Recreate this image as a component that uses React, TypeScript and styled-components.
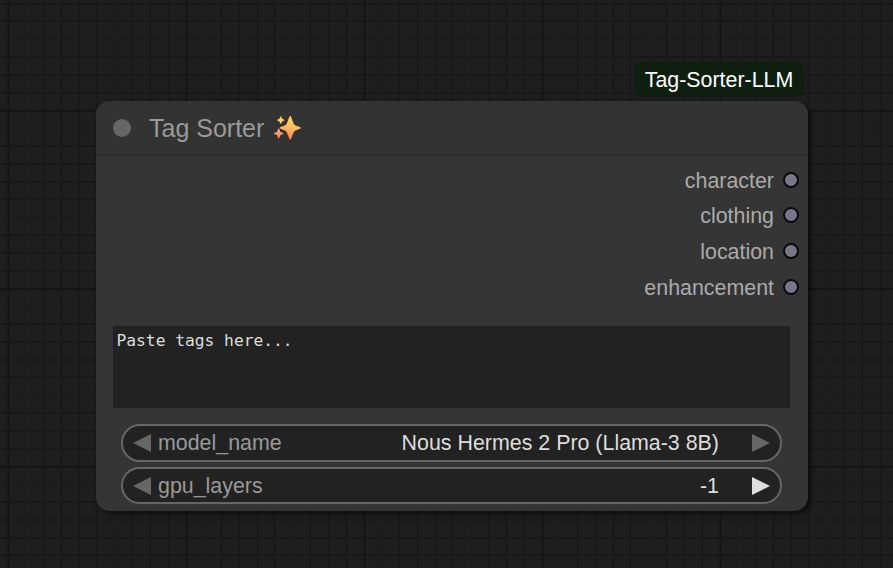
import React from "react";
import styled, { createGlobalStyle } from "styled-components";

const GlobalStyle = createGlobalStyle`
  * { box-sizing: border-box; }
  html, body { margin: 0; padding: 0; background: #1e1e1e; }
  body { font-family: "Liberation Sans", Arial, sans-serif; overflow: hidden; }
`;

const TILE = 178;

/* Stops for one tile of the canvas grid: a major line, then nine minor ones. */
const gridLines = (direction: string) => {
  const stops = ["#141414 0 2px"];
  let last = 2;
  [17, 35, 53, 71, 88, 106, 124, 142, 160].forEach((at) => {
    const faint = at === 17 || at === 106;
    stops.push(`transparent ${last}px ${at}px`);
    stops.push(`${faint ? "#1b1b1b" : "#181818"} ${at}px ${at + 2}px`);
    last = at + 2;
  });
  stops.push(`transparent ${last}px ${TILE}px`);
  return `linear-gradient(${direction}, ${stops.join(", ")})`;
};

const Canvas = styled.main`
  width: 893px;
  height: 568px;
  padding: 62px 85px 0 95.5px;
  background-color: #1e1e1e;
  background-image: ${gridLines("to right")}, ${gridLines("to bottom")};
  background-size: ${TILE}px ${TILE}px;
  background-position: 7.5px 0, 0 110px;
  display: flex;
  flex-direction: column;
  overflow: hidden;
`;

const Badge = styled.div`
  align-self: flex-end;
  margin-right: 4px;
  width: 170px;
  height: 35px;
  margin-bottom: 3.5px;
  padding-top: 1px;
  border-radius: 8px;
  background: #0f1f0f;
  color: #fff;
  font-size: 21.4px;
  line-height: 35px;
  text-align: center;
  white-space: nowrap;
`;

const Node = styled.section`
  width: 712px;
  height: 410px;
  border-radius: 14px;
  background: #353535;
  box-shadow: 3px 3px 5px rgba(0, 0, 0, 0.55);
  display: flex;
  flex-direction: column;
`;

const Header = styled.header`
  height: 55px;
  border-radius: 14px 14px 0 0;
  background: #333;
  border-bottom: 2px solid #2c2c2c;
  padding: 1px 0 0 17.5px;
  display: flex;
  align-items: center;
`;

const CollapseDot = styled.span`
  width: 18px;
  height: 18px;
  border-radius: 50%;
  background: #666;
`;

const Title = styled.h1`
  margin: 0 0 0 18px;
  color: #999;
  font-size: 25px;
  font-weight: 400;
  line-height: 30px;
  white-space: nowrap;
`;

const SparkleIcon = styled.svg`
  width: 27px;
  height: 24px;
  margin-left: 9.5px;
`;

const Outputs = styled.ul`
  list-style: none;
  margin: 0;
  padding: 6.5px 8.5px 0 0;
  height: 170px;
`;

const Output = styled.li`
  height: 35.6px;
  display: flex;
  justify-content: flex-end;
  align-items: center;
  gap: 9px;
  color: #aaa;
  font-size: 21.4px;
  line-height: 26px;
`;

const OutputLabel = styled.span`
  padding-top: 2px;
`;

const Port = styled.span`
  width: 16px;
  height: 16px;
  border-radius: 50%;
  border: 2px solid #0a0a0a;
  background: #778;
`;

const TagInput = styled.textarea`
  display: block;
  width: 677px;
  height: 82px;
  margin: 0 0 16.5px 17.5px;
  padding: 5px 3.5px;
  border: 0;
  outline: 0;
  resize: none;
  background: #222;
  color: #ddd;
  font: 16.25px/20px "DejaVu Sans Mono", monospace;
  &::placeholder { color: #ddd; opacity: 1; }
`;

const Widget = styled.div`
  width: 661px;
  height: 37.5px;
  margin: 0 0 5.3px 25.5px;
  padding: 0 10px;
  border: 2px solid #666;
  border-radius: 19px;
  background: #222;
  display: flex;
  align-items: center;
  font-size: 21.4px;
  line-height: 24px;
  white-space: nowrap;
`;

const Arrow = styled.svg<{ $active?: boolean }>`
  width: 18px;
  height: 18px;
  flex: none;
  fill: ${(p) => (p.$active ? "#ddd" : "#666")};
`;

const Name = styled.span`
  margin-left: 7px;
  padding-top: 0.6px;
  color: #999;
`;

const Value = styled.span`
  margin: 0 33px 0 auto;
  padding-top: 0.6px;
  color: #ddd;
`;

const Sparkles = () => (
  <SparkleIcon viewBox="0 0 27 24" aria-hidden="true">
    <defs>
      <linearGradient id="spark" x1="0" y1="0" x2="0" y2="24" gradientUnits="userSpaceOnUse">
        <stop offset="0" stopColor="#ffd567" />
        <stop offset="0.5" stopColor="#ffb85e" />
        <stop offset="1" stopColor="#f87858" />
      </linearGradient>
    </defs>
    <g fill="url(#spark)">
      <path d="M15.2 1.3q1-2.4 2 0l2.4 6.2q.6 1.4 2 1.9l4.3 1.6q1.8.9 0 1.8l-4.4 1.6q-1.3.6-1.9 2l-2.4 6q-1 2.4-2 0l-2.4-6q-.6-1.4-1.9-2l-4.3-1.6q-1.8-.9 0-1.8l4.3-1.6q1.3-.5 1.9-1.9z" />
      <path d="M6.2.9q.6-1.4 1.2 0l.8 1.9 1.7.7q1.3.6 0 1.2l-1.7.7-.8 1.9q-.6 1.3-1.2 0l-.8-1.9-1.7-.7q-1.3-.6 0-1.2l1.7-.7z" />
      <path d="M4 13.3q.7-1.5 1.4 0l1 2.6 2.3.9q1.4.7 0 1.4l-2.3.9-1 2.6q-.7 1.5-1.4 0l-1-2.6-2.3-.9q-1.4-.7 0-1.4l2.3-.9z" />
    </g>
  </SparkleIcon>
);

const LeftArrow = () => (
  <Arrow viewBox="0 0 18 18">
    <path d="M18 0v18L0 9z" />
  </Arrow>
);

const RightArrow = ({ active }: { active?: boolean }) => (
  <Arrow viewBox="0 0 18 18" $active={active}>
    <path d="M0 0v18L18 9z" />
  </Arrow>
);

const outputs = ["character", "clothing", "location", "enhancement"];
const widgets = [
  { name: "model_name", value: "Nous Hermes 2 Pro (Llama-3 8B)", next: false },
  { name: "gpu_layers", value: "-1", next: true },
];

export default function App() {
  return (
    <>
      <GlobalStyle />
      <Canvas>
        <Badge>Tag-Sorter-LLM</Badge>
        <Node>
          <Header>
            <CollapseDot />
            <Title>Tag Sorter</Title>
            <Sparkles />
          </Header>
          <Outputs>
            {outputs.map((name) => (
              <Output key={name}>
                <OutputLabel>{name}</OutputLabel>
                <Port />
              </Output>
            ))}
          </Outputs>
          <TagInput placeholder="Paste tags here..." spellCheck={false} />
          {widgets.map((w) => (
            <Widget key={w.name}>
              <LeftArrow />
              <Name>{w.name}</Name>
              <Value>{w.value}</Value>
              <RightArrow active={w.next} />
            </Widget>
          ))}
        </Node>
      </Canvas>
    </>
  );
}
